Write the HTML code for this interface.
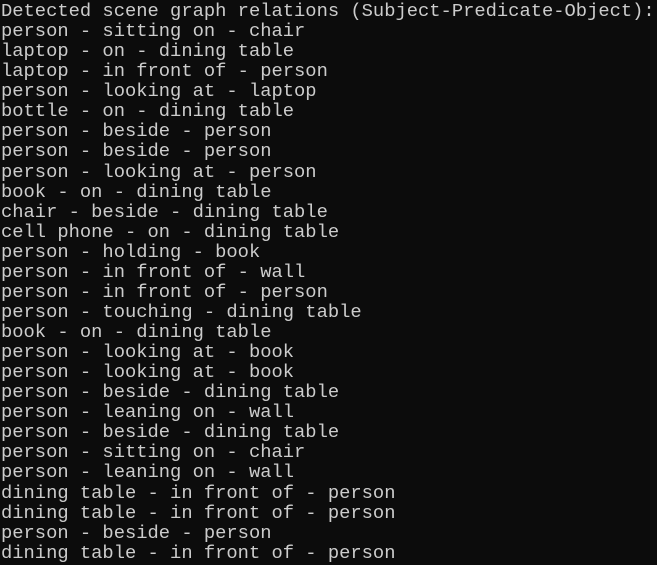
<!DOCTYPE html>
<html><head><meta charset="utf-8"><style>
html,body{margin:0;padding:0;background:#0c0c0c;width:657px;height:565px;overflow:hidden}
pre{margin:0;padding:0 0 0 1px;position:relative;top:1px;font-family:"Liberation Mono","DejaVu Sans Mono",monospace;font-size:18.8px;line-height:20.07px;color:#cccccc;white-space:pre}
</style></head><body><pre>Detected scene graph relations (Subject-Predicate-Object):
person - sitting on - chair
laptop - on - dining table
laptop - in front of - person
person - looking at - laptop
bottle - on - dining table
person - beside - person
person - beside - person
person - looking at - person
book - on - dining table
chair - beside - dining table
cell phone - on - dining table
person - holding - book
person - in front of - wall
person - in front of - person
person - touching - dining table
book - on - dining table
person - looking at - book
person - looking at - book
person - beside - dining table
person - leaning on - wall
person - beside - dining table
person - sitting on - chair
person - leaning on - wall
dining table - in front of - person
dining table - in front of - person
person - beside - person
dining table - in front of - person</pre></body></html>
